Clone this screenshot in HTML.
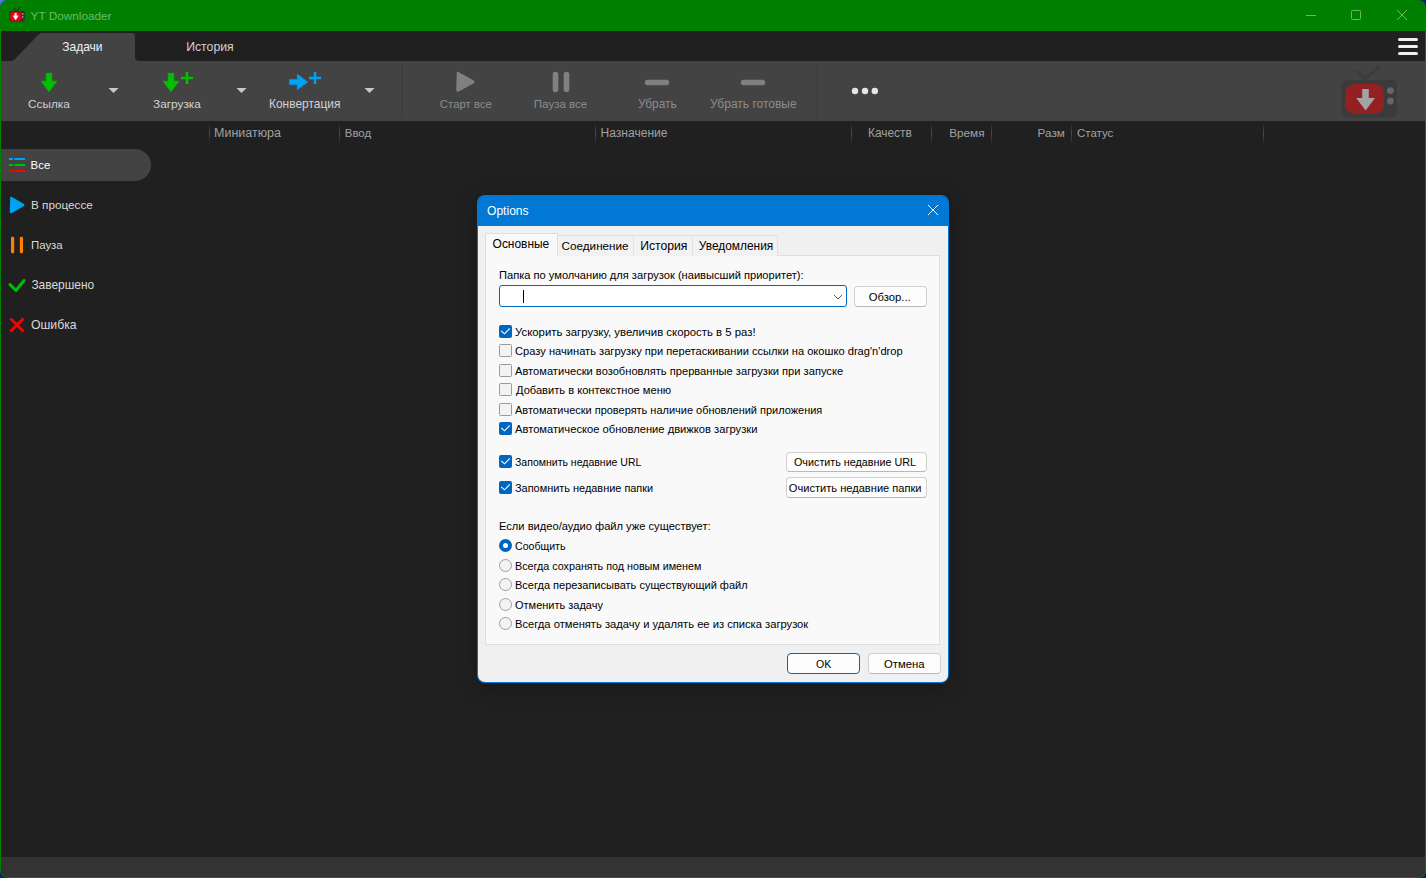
<!DOCTYPE html>
<html><head><meta charset="utf-8"><title>YT Downloader</title>
<style>
html,body{margin:0;padding:0}
body{width:1426px;height:878px;overflow:hidden;position:relative;background:linear-gradient(135deg,#5a8ae8 0,#2050c0 6px,#0d1f70 30px);font-family:"Liberation Sans",sans-serif}
.a{position:absolute}
.t{position:absolute;white-space:nowrap;line-height:1em;font-family:"Liberation Sans",sans-serif}
svg{position:absolute;overflow:visible}
</style></head><body>
<div class="a" style="left:0px;top:0px;width:1426px;height:878px;background:#008000;border-radius:8px 8px 8px 8px"></div>
<div class="a" style="left:1px;top:31px;width:1424px;height:846px;background:#202020;border-radius:0 0 7px 7px;overflow:hidden"></div>
<svg style="left:0;top:0" width="40" height="31" viewBox="0 0 40 31">
<path d="M13.5 8 L16.5 11 L19.5 7.5" stroke="#333" stroke-width="1.3" fill="none" stroke-linecap="round"/>
<rect x="9.3" y="11" width="15.6" height="10.6" rx="1.5" fill="#333"/>
<rect x="10.3" y="12" width="11" height="8.7" rx="2" fill="#e8000b"/>
<path d="M14.8 13.2 h1.7 v2.6 h1.8 l-2.65 4.2 l-2.65 -4.2 h1.8 z" fill="#fff" stroke="#fff" stroke-width="0.4" stroke-linejoin="round"/>
<rect x="21.9" y="13.2" width="1.6" height="1.6" fill="#999"/>
<rect x="21.9" y="16.2" width="1.6" height="1.6" fill="#999"/>
</svg>
<div class="t" style="left:30.6px;top:10.00px;font-size:11.78px;color:#6cb86c;">YT Downloader</div>
<svg style="left:0;top:0" width="1426" height="31" viewBox="0 0 1426 31">
<path d="M1306 15.5 h10" stroke="#6cb86c" stroke-width="1"/>
<rect x="1351.5" y="10.5" width="9" height="9" rx="1" stroke="#6cb86c" stroke-width="1" fill="none"/>
<path d="M1397 10 L1407 20 M1407 10 L1397 20" stroke="#6cb86c" stroke-width="1"/>
</svg>
<svg style="left:0;top:31px" width="170" height="30" viewBox="0 0 170 30">
<path d="M1 30 L11 30 Q13 30 14.5 28.5 L38.5 3.5 Q40 2 42 2 L132 2 Q135 2 135 5 L135 26 Q135 30 139 30 Z" fill="#434343"/>
</svg>
<div class="t" style="left:62.2px;top:41.00px;font-size:12.03px;color:#f0f0f0;">Задачи</div>
<div class="t" style="left:186.2px;top:41.00px;font-size:12.25px;color:#d2d2d2;">История</div>
<div class="a" style="left:1398px;top:38px;width:20px;height:3px;background:#f0f0f0;border-radius:1.5px"></div>
<div class="a" style="left:1398px;top:45px;width:20px;height:3px;background:#f0f0f0;border-radius:1.5px"></div>
<div class="a" style="left:1398px;top:52px;width:20px;height:3px;background:#f0f0f0;border-radius:1.5px"></div>
<div class="a" style="left:1px;top:61px;width:1424px;height:60px;background:#434343"></div>
<svg style="left:0;top:0" width="1426" height="130" viewBox="0 0 1426 130">
<!-- link: green down arrow -->
<path d="M46.2 73.3 h5.6 v7.9 h5 l-7.8 10.6 l-7.8 -10.6 h5 z" fill="#00c000" stroke="#00c000" stroke-width="0.6" stroke-linejoin="round"/>
<path d="M108.5 88 h10 l-5 5 z" fill="#c8c8c8"/>
<!-- download: green arrow + plus -->
<path d="M168.2 73.3 h5.6 v7.9 h5 l-7.8 10.6 l-7.8 -10.6 h5 z" fill="#00c000" stroke="#00c000" stroke-width="0.6" stroke-linejoin="round"/>
<path d="M181 78 h12 M187 72 v12" stroke="#00c000" stroke-width="2.6"/>
<path d="M236.5 88 h10 l-5 5 z" fill="#c8c8c8"/>
<!-- convert: blue right arrow + plus -->
<path d="M289.4 79.4 h7.9 v-5.1 l10.3 7.7 l-10.3 7.7 v-5.1 h-7.9 z" fill="#00a2f5" stroke="#00a2f5" stroke-width="0.6" stroke-linejoin="round"/>
<path d="M309 78 h12 M315 72 v12" stroke="#00a2f5" stroke-width="2.4"/>
<path d="M364.5 88 h10 l-5 5 z" fill="#c8c8c8"/>
<!-- separators -->
<path d="M402 64 v54" stroke="#3a3a3a" stroke-width="1"/>
<path d="M817 64 v54" stroke="#3a3a3a" stroke-width="1"/>
<!-- play -->
<path d="M457.5 73.5 Q457 72 458.5 72.8 L473 80.8 Q474.5 81.8 473 82.8 L458.5 90.8 Q457 91.6 457 90 Z" fill="#808080" stroke="#808080" stroke-width="1.5" stroke-linejoin="round"/>
<!-- pause -->
<path d="M555.5 74.5 v15 M566.5 74.5 v15" stroke="#808080" stroke-width="5.6" stroke-linecap="round"/>
<!-- minus -->
<path d="M647.5 82.5 h19" stroke="#808080" stroke-width="5.4" stroke-linecap="round"/>
<path d="M743.5 82.5 h19" stroke="#808080" stroke-width="5.4" stroke-linecap="round"/>
<!-- dots -->
<circle cx="855" cy="91" r="3.2" fill="#e6e6e6"/>
<circle cx="865" cy="91" r="3.2" fill="#e6e6e6"/>
<circle cx="874.8" cy="91" r="3.2" fill="#e6e6e6"/>
<!-- big logo -->
<path d="M1357 71.6 L1365 78.7 L1378.7 67.5" stroke="#3b3b3b" stroke-width="3" fill="none" stroke-linecap="round"/>
<rect x="1341.5" y="80" width="55.4" height="37.7" rx="5" fill="#3b3b3b"/>
<rect x="1345.3" y="83.9" width="38.6" height="30.1" rx="9" fill="#942121"/>
<path d="M1362.2 89 h6.6 v9 h6.2 l-9.4 12.5 l-9.4 -12.5 h6 z" fill="#a3a3a3"/>
<circle cx="1390.4" cy="90.6" r="3.4" fill="#666"/>
<circle cx="1390.4" cy="101" r="3.4" fill="#666"/>
</svg>
<div class="t" style="left:28.0px;top:99.00px;font-size:11.81px;color:#d2d2d2;">Ссылка</div>
<div class="t" style="left:153.0px;top:99.00px;font-size:11.83px;color:#d2d2d2;">Загрузка</div>
<div class="t" style="left:269.0px;top:99.00px;font-size:11.96px;color:#d2d2d2;">Конвертация</div>
<div class="t" style="left:439.8px;top:99.00px;font-size:11.42px;color:#8c8c8c;">Старт все</div>
<div class="t" style="left:533.8px;top:99.00px;font-size:11.56px;color:#8c8c8c;">Пауза все</div>
<div class="t" style="left:638.0px;top:99.00px;font-size:11.90px;color:#8c8c8c;">Убрать</div>
<div class="t" style="left:710.0px;top:98.00px;font-size:12.01px;color:#8c8c8c;">Убрать готовые</div>
<div class="a" style="left:209px;top:122px;width:1px;height:23px;background:linear-gradient(#202020,#4a4a4a 50%,#202020)"></div>
<div class="a" style="left:339px;top:122px;width:1px;height:23px;background:linear-gradient(#202020,#4a4a4a 50%,#202020)"></div>
<div class="a" style="left:595px;top:122px;width:1px;height:23px;background:linear-gradient(#202020,#4a4a4a 50%,#202020)"></div>
<div class="a" style="left:851px;top:122px;width:1px;height:23px;background:linear-gradient(#202020,#4a4a4a 50%,#202020)"></div>
<div class="a" style="left:931px;top:122px;width:1px;height:23px;background:linear-gradient(#202020,#4a4a4a 50%,#202020)"></div>
<div class="a" style="left:991px;top:122px;width:1px;height:23px;background:linear-gradient(#202020,#4a4a4a 50%,#202020)"></div>
<div class="a" style="left:1071px;top:122px;width:1px;height:23px;background:linear-gradient(#202020,#4a4a4a 50%,#202020)"></div>
<div class="a" style="left:1263px;top:122px;width:1px;height:23px;background:linear-gradient(#202020,#4a4a4a 50%,#202020)"></div>
<div class="t" style="left:214.0px;top:127.00px;font-size:12.50px;color:#a0a0a0;">Миниатюра</div>
<div class="t" style="left:344.8px;top:128.00px;font-size:11.43px;color:#a0a0a0;">Ввод</div>
<div class="t" style="left:600.6px;top:127.00px;font-size:12.04px;color:#a0a0a0;">Назначение</div>
<div class="t" style="left:868.0px;top:128.00px;font-size:11.92px;color:#a0a0a0;">Качеств</div>
<div class="t" style="left:949.2px;top:127.00px;font-size:11.77px;color:#a0a0a0;">Время</div>
<div class="t" style="left:1037.6px;top:127.00px;font-size:11.71px;color:#a0a0a0;">Разм</div>
<div class="t" style="left:1077.0px;top:128.00px;font-size:11.49px;color:#a0a0a0;">Статус</div>
<div class="a" style="left:1px;top:149px;width:150px;height:32px;background:#434343;border-radius:0 16px 16px 0"></div>
<svg style="left:0;top:0" width="160" height="340" viewBox="0 0 160 340">
<path d="M9 159 h4 M14.3 159 h10.7" stroke="#00a2f5" stroke-width="2.2"/>
<path d="M9 165 h4 M14.3 165 h10.7" stroke="#00c000" stroke-width="2.2"/>
<path d="M9 171 h4 M14.3 171 h10.7" stroke="#ff0000" stroke-width="2.2"/>
<path d="M10.8 198.3 Q10.3 197 11.6 197.6 L23.2 204.2 Q24.3 205 23.2 205.8 L11.6 212.4 Q10.3 213 10.3 211.7 Z" fill="#00a2f5" stroke="#00a2f5" stroke-width="1.2" stroke-linejoin="round"/>
<rect x="11" y="236.8" width="3.2" height="16.4" rx="1.2" fill="#ff8000"/><rect x="19.85" y="236.8" width="3.2" height="16.4" rx="1.2" fill="#ff8000"/>
<path d="M10 284.6 L16 290.4 L24 280.5" stroke="#00c000" stroke-width="3" fill="none" stroke-linecap="round" stroke-linejoin="round"/>
<path d="M10.5 318.5 L23.5 331.5 M23.5 318.5 L10.5 331.5" stroke="#ff0000" stroke-width="2.8"/>
</svg>
<div class="t" style="left:30.6px;top:160.00px;font-size:11.41px;color:#ffffff;">Все</div>
<div class="t" style="left:31.0px;top:199.00px;font-size:11.74px;color:#dadada;">В процессе</div>
<div class="t" style="left:31.0px;top:240.00px;font-size:11.40px;color:#dadada;">Пауза</div>
<div class="t" style="left:31.4px;top:280.00px;font-size:11.94px;color:#dadada;">Завершено</div>
<div class="t" style="left:31.0px;top:319.00px;font-size:12.26px;color:#dadada;">Ошибка</div>
<div class="a" style="left:1px;top:857px;width:1424px;height:20px;background:#333333;border-radius:0 0 7px 7px"></div>
<div class="a" style="left:477px;top:195px;width:472px;height:488px;background:#0078d4;border-radius:8px;box-shadow:0 4px 22px rgba(0,0,0,0.28)"></div>
<div class="a" style="left:478px;top:226px;width:470px;height:456px;background:#f0f0f0;border-radius:0 0 7px 7px"></div>
<div class="t" style="left:487.0px;top:205.00px;font-size:12.08px;color:#ffffff;">Options</div>
<svg style="left:0;top:0" width="1426" height="878" viewBox="0 0 1426 878">
<path d="M928 205 L938 215 M938 205 L928 215" stroke="#fff" stroke-width="1"/>
</svg>
<div class="a" style="left:485px;top:255px;width:453px;height:388px;background:#f9f9f9;border:1px solid #dedede"></div>
<div class="a" style="left:556px;top:235px;width:77px;height:20px;background:#f2f2f2;border:1px solid #e2e2e2;border-bottom:none"></div>
<div class="a" style="left:633px;top:235px;width:59px;height:20px;background:#f2f2f2;border:1px solid #e2e2e2;border-bottom:none"></div>
<div class="a" style="left:692px;top:235px;width:84px;height:20px;background:#f2f2f2;border:1px solid #e2e2e2;border-bottom:none"></div>
<div class="a" style="left:485px;top:233px;width:71px;height:23px;background:#f9f9f9;border:1px solid #dedede;border-bottom:none;border-radius:1px 1px 0 0"></div>
<div class="t" style="left:492.6px;top:239.00px;font-size:11.95px;color:#000;">Основные</div>
<div class="t" style="left:561.6px;top:240.00px;font-size:11.69px;color:#000;">Соединение</div>
<div class="t" style="left:640.2px;top:240.00px;font-size:12.18px;color:#000;">История </div>
<div class="t" style="left:698.8px;top:241.00px;font-size:11.91px;color:#000;">Уведомления</div>
<div class="t" style="left:499.0px;top:270.00px;font-size:11.11px;color:#000;">Папка по умолчанию для загрузок (наивысший приоритет):</div>
<div class="a" style="left:499px;top:285px;width:346px;height:20px;background:#fff;border:1px solid #0067c0;border-bottom:1.5px solid #0067c0;border-radius:3px"></div>
<div class="a" style="left:523px;top:290px;width:1px;height:13px;background:#000"></div>
<svg style="left:0;top:0" width="1426" height="878" viewBox="0 0 1426 878">
<path d="M834 295 L838 299 L842 295" stroke="#555" stroke-width="1" fill="none"/>
</svg>
<div class="a" style="left:854px;top:286px;width:71px;height:19px;background:#fdfdfd;border:1px solid #d0d0d0;border-bottom-color:#b8b8b8;border-radius:4px"></div>
<div class="t" style="left:868.8px;top:292.00px;font-size:11.28px;color:#000;">Обзор...</div>
<div class="a" style="left:499px;top:325px;width:13px;height:13px;background:#0067c0;border-radius:2px"></div>
<svg style="left:0;top:0" width="1" height="1" viewBox="0 0 1 1"><path d="M501.2 330.8 L504.5 333.8 L509.8 328.4" stroke="#fff" stroke-width="1.1" fill="none"/></svg>
<div class="t" style="left:515.0px;top:327.00px;font-size:11.39px;color:#000;">Ускорить загрузку, увеличив скорость в 5 раз!</div>
<div class="a" style="left:499px;top:344px;width:11px;height:11px;background:#f3f3f3;border:1px solid #9a9a9a;border-radius:1.5px"></div>
<div class="t" style="left:515.0px;top:346.00px;font-size:11.14px;color:#000;">Сразу начинать загрузку при перетаскивании ссылки на окошко drag'n'drop</div>
<div class="a" style="left:499px;top:364px;width:11px;height:11px;background:#f3f3f3;border:1px solid #9a9a9a;border-radius:1.5px"></div>
<div class="t" style="left:515.0px;top:366.00px;font-size:11.14px;color:#000;">Автоматически возобновлять прерванные загрузки при запуске</div>
<div class="a" style="left:499px;top:383px;width:11px;height:11px;background:#f3f3f3;border:1px solid #9a9a9a;border-radius:1.5px"></div>
<div class="t" style="left:516.0px;top:385.00px;font-size:11.12px;color:#000;">Добавить в контекстное меню</div>
<div class="a" style="left:499px;top:403px;width:11px;height:11px;background:#f3f3f3;border:1px solid #9a9a9a;border-radius:1.5px"></div>
<div class="t" style="left:515.0px;top:405.00px;font-size:10.97px;color:#000;">Автоматически проверять наличие обновлений приложения</div>
<div class="a" style="left:499px;top:422px;width:13px;height:13px;background:#0067c0;border-radius:2px"></div>
<svg style="left:0;top:0" width="1" height="1" viewBox="0 0 1 1"><path d="M501.2 427.8 L504.5 430.8 L509.8 425.4" stroke="#fff" stroke-width="1.1" fill="none"/></svg>
<div class="t" style="left:515.0px;top:424.00px;font-size:11.18px;color:#000;">Автоматическое обновление движков загрузки</div>
<div class="a" style="left:499px;top:455px;width:13px;height:13px;background:#0067c0;border-radius:2px"></div>
<svg style="left:0;top:0" width="1" height="1" viewBox="0 0 1 1"><path d="M501.2 460.8 L504.5 463.8 L509.8 458.4" stroke="#fff" stroke-width="1.1" fill="none"/></svg>
<div class="t" style="left:515.0px;top:457.00px;font-size:10.52px;color:#000;">Запомнить недавние URL</div>
<div class="a" style="left:499px;top:481px;width:13px;height:13px;background:#0067c0;border-radius:2px"></div>
<svg style="left:0;top:0" width="1" height="1" viewBox="0 0 1 1"><path d="M501.2 486.8 L504.5 489.8 L509.8 484.4" stroke="#fff" stroke-width="1.1" fill="none"/></svg>
<div class="t" style="left:515.0px;top:483.00px;font-size:10.93px;color:#000;">Запомнить недавние папки</div>
<div class="a" style="left:786px;top:452px;width:139px;height:18px;background:#fdfdfd;border:1px solid #d0d0d0;border-bottom-color:#b8b8b8;border-radius:4px"></div>
<div class="t" style="left:794.0px;top:457.00px;font-size:10.78px;color:#000;">Очистить недавние URL</div>
<div class="a" style="left:786px;top:477px;width:139px;height:19px;background:#fdfdfd;border:1px solid #d0d0d0;border-bottom-color:#b8b8b8;border-radius:4px"></div>
<div class="t" style="left:788.8px;top:483.00px;font-size:11.10px;color:#000;">Очистить недавние папки</div>
<div class="t" style="left:499.0px;top:521.00px;font-size:11.13px;color:#000;">Если видео/аудио файл уже существует:</div>
<div class="a" style="left:499px;top:538.8px;width:13px;height:13px;background:#0067c0;border-radius:50%"></div>
<div class="a" style="left:503px;top:542.8px;width:5px;height:5px;background:#fff;border-radius:50%"></div>
<div class="t" style="left:515.0px;top:541.00px;font-size:10.59px;color:#000;">Сообщить</div>
<div class="a" style="left:499px;top:558.5px;width:11px;height:11px;background:#f3f3f3;border:1px solid #a0a0a0;border-radius:50%"></div>
<div class="t" style="left:515.0px;top:561.00px;font-size:10.76px;color:#000;">Всегда сохранять под новым именем</div>
<div class="a" style="left:499px;top:578.0px;width:11px;height:11px;background:#f3f3f3;border:1px solid #a0a0a0;border-radius:50%"></div>
<div class="t" style="left:515.0px;top:580.00px;font-size:11.03px;color:#000;">Всегда перезаписывать существующий файл</div>
<div class="a" style="left:499px;top:597.8px;width:11px;height:11px;background:#f3f3f3;border:1px solid #a0a0a0;border-radius:50%"></div>
<div class="t" style="left:515.0px;top:600.00px;font-size:10.99px;color:#000;">Отменить задачу</div>
<div class="a" style="left:499px;top:617.0px;width:11px;height:11px;background:#f3f3f3;border:1px solid #a0a0a0;border-radius:50%"></div>
<div class="t" style="left:515.0px;top:619.00px;font-size:11.18px;color:#000;">Всегда отменять задачу и удалять ее из списка загрузок</div>
<div class="a" style="left:787px;top:653px;width:71px;height:19px;background:#fdfdfd;border:1px solid #0067c0;border-bottom-color:#0067c0;border-radius:4px"></div>
<div class="t" style="left:816.0px;top:659.00px;font-size:10.58px;color:#000;">OK</div>
<div class="a" style="left:868px;top:653px;width:71px;height:19px;background:#fdfdfd;border:1px solid #d0d0d0;border-bottom-color:#b8b8b8;border-radius:4px"></div>
<div class="t" style="left:884.0px;top:659.00px;font-size:11.33px;color:#000;">Отмена</div>
</body></html>
